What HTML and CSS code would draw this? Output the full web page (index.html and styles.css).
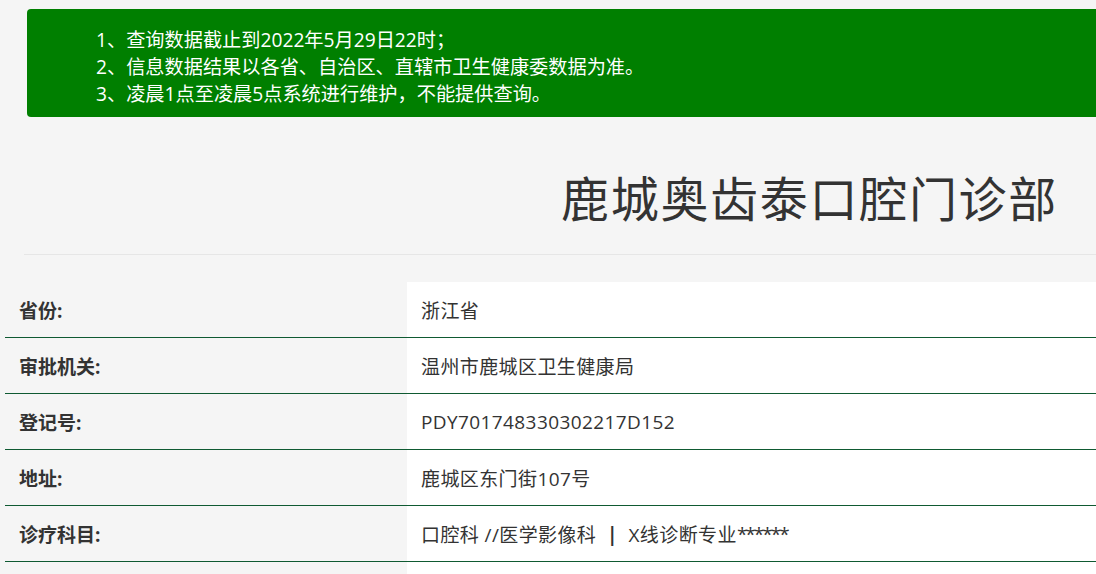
FILE: index.html
```html
<!DOCTYPE html>
<html lang="zh-CN">
<head>
<meta charset="utf-8">
<title>鹿城奥齿泰口腔门诊部</title>
<link rel="stylesheet" href="styles.css">
</head>
<body>
<div class="notice">
  <p>1、查询数据截止到2022年5月29日22时；</p>
  <p>2、信息数据结果以各省、自治区、直辖市卫生健康委数据为准。</p>
  <p>3、凌晨1点至凌晨5点系统进行维护，不能提供查询。</p>
</div>
<div class="title-wrap">
  <h1 class="title">鹿城奥齿泰口腔门诊部</h1>
</div>
<div class="table">
  <div class="row"><div class="label">省份:</div><div class="value">浙江省</div></div>
  <div class="row"><div class="label">审批机关:</div><div class="value">温州市鹿城区卫生健康局</div></div>
  <div class="row"><div class="label">登记号:</div><div class="value">PDY701748330302217D152</div></div>
  <div class="row"><div class="label">地址:</div><div class="value">鹿城区东门街107号</div></div>
  <div class="row"><div class="label">诊疗科目:</div><div class="value">口腔科 //医学影像科 &nbsp;<b>|</b>&nbsp; X线诊断专业<span class="stars">******</span></div></div>
  <div class="row"><div class="label"></div><div class="value"></div></div>
</div>
</body>
</html>
```
FILE: styles.css
```css
html, body {
  margin: 0;
  padding: 0;
  background: #f5f5f5;
  font-family: "Open Sans", "Noto Sans CJK SC", sans-serif;
  color: #333;
  height: 574px;
  overflow: hidden;
}
.notice {
  margin: 9px 0 0 27px;
  height: 108px;
  box-sizing: border-box;
  background: #007f00;
  border-radius: 4px 0 0 4px;
  padding: 17px 0 0 69px;
  color: #fff;
  font-size: 19.2px;
  line-height: 27px;
}
.notice p {
  margin: 0;
  white-space: nowrap;
}
.title-wrap {
  margin: 0 0 0 24px;
  height: 138px;
  border-bottom: 1px solid #e6e6e6;
  box-sizing: border-box;
  display: flex;
  align-items: center;
  justify-content: flex-end;
  padding: 20px 38px 0 0;
}
.title {
  margin: 0;
  font-family: "Noto Sans CJK SC", sans-serif;
  font-weight: 400;
  font-size: 48px;
  letter-spacing: 1.7px;
  color: #333;
}
.table {
  margin-top: 27px;
}
.row {
  display: flex;
  height: 56px;
}
.label {
  width: 407px;
  flex: none;
  box-sizing: border-box;
  padding-left: 19px;
  display: flex;
  align-items: center;
  font-weight: 700;
  font-size: 19px;
  color: #333;
  position: relative;
}
.label::after {
  content: "";
  position: absolute;
  left: 5px;
  right: 0;
  bottom: 0;
  border-bottom: 1px solid #0f5a32;
}
.value {
  flex: 1;
  background: #fff;
  box-sizing: border-box;
  padding-left: 14px;
  display: flex;
  align-items: center;
  font-size: 19px;
  letter-spacing: 0.4px;
  color: #333;
  border-bottom: 1px solid #0f5a32;
  white-space: pre;
}
.value b {
  font-weight: 700;
}
.stars {
  letter-spacing: -2px;
}
.row:last-child .label::after,
.row:last-child .value {
  border-bottom: none;
}
```
